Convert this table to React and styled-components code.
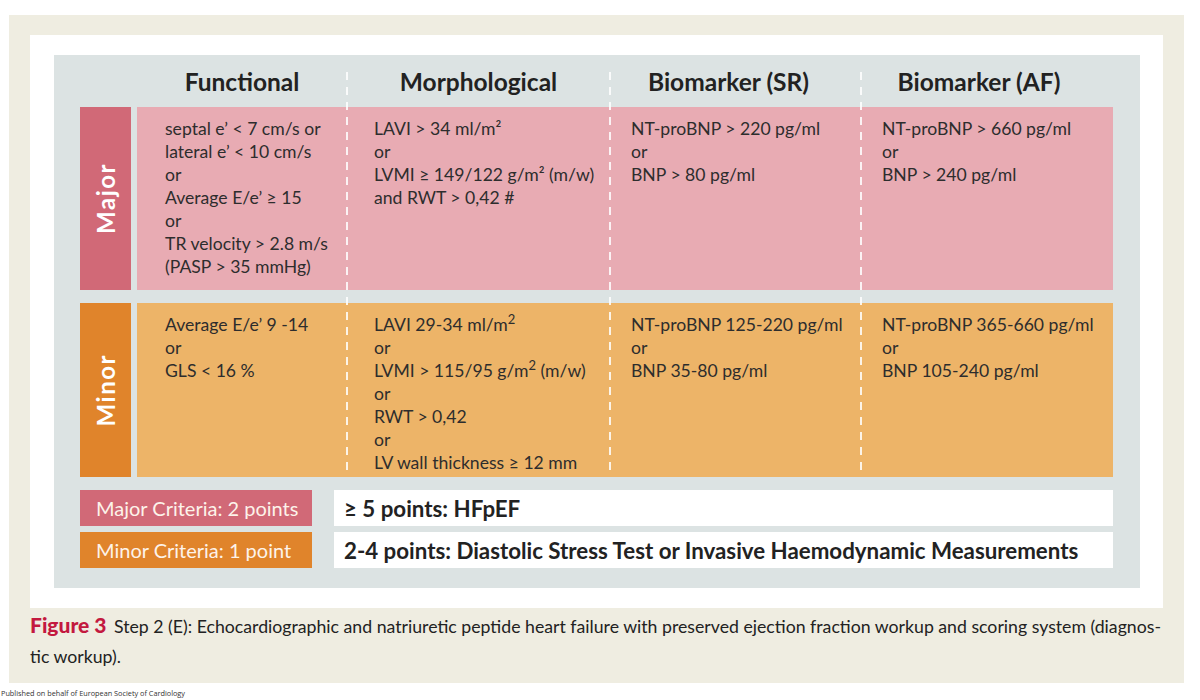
import React from "react";
import styled, { createGlobalStyle } from "styled-components";

const Global = createGlobalStyle`
  body {
    margin: 0;
    background: #ffffff;
    font-family: Lato, "Liberation Sans", sans-serif;
  }
`;

const Page = styled.div`
  width: 1200px;
  height: 700px;
  padding-top: 15px;
  box-sizing: border-box;
  overflow: hidden;
`;

const Frame = styled.div`
  margin-left: 9px;
  width: 1175px;
  height: 668px;
  background: #efede1;
  padding: 20px 21px 0 21px;
  box-sizing: border-box;
`;

const Sheet = styled.div`
  background: #ffffff;
  padding: 20px 23px 20px 24px;
`;

const Board = styled.div`
  background: #dce3e3;
  padding: 0 27px 20px 26px;
`;

const Table = styled.div`
  display: flex;
`;

const LabelColumn = styled.div`
  width: 51px;
  margin-right: 6px;
  display: flex;
  flex-direction: column;
`;

const DataColumn = styled.div`
  width: ${(p) => p.width}px;
  display: flex;
  flex-direction: column;
  position: relative;
  ${(p) =>
    p.dashed &&
    `
    &::before {
      content: "";
      position: absolute;
      left: -1px;
      top: 17px;
      bottom: 0;
      width: 2px;
      background: repeating-linear-gradient(
        to bottom,
        rgba(255,255,255,0.85) 0 8px,
        transparent 8px 15px
      );
    }
  `}
`;

const Header = styled.div`
  height: 52px;
  display: flex;
  align-items: center;
  justify-content: center;
  font-size: 24.5px;
  font-weight: 700;
  color: #222;
  padding-right: ${(p) => p.shift || 0}px;
`;

const RowLabel = styled.div`
  height: ${(p) => p.h}px;
  margin-top: ${(p) => p.mt || 0}px;
  background: ${(p) => p.bg};
  display: flex;
  align-items: center;
  justify-content: center;
  span {
    writing-mode: vertical-rl;
    transform: rotate(180deg);
    color: #fff;
    font-size: 24px;
    font-weight: 700;
    letter-spacing: 1.5px;
  }
`;

const Cell = styled.div`
  height: ${(p) => p.h}px;
  margin-top: ${(p) => p.mt || 0}px;
  background: ${(p) => p.bg};
  padding: 10px 0 0 ${(p) => p.pl}px;
  box-sizing: border-box;
  font-size: 17.6px;
  line-height: 23px;
  color: #2d2d2d;
  white-space: nowrap;
`;

const Sup = styled.sup`
  font-size: 13px;
  line-height: 0;
`;

const Legend = styled.div`
  display: grid;
  grid-template-columns: 232px 1fr;
  column-gap: 22px;
  row-gap: 6px;
  margin-top: 13px;
`;

const Badge = styled.div`
  height: 36px;
  background: ${(p) => p.bg};
  color: #fdf3ea;
  font-size: 20px;
  display: flex;
  align-items: center;
  padding-left: 16px;
`;

const Score = styled.div`
  height: 36px;
  background: #fff;
  color: #222;
  font-size: 22.3px;
  font-weight: 700;
  display: flex;
  align-items: center;
  padding-left: 10px;
  white-space: nowrap;
`;

const Caption = styled.div`
  padding-top: 2px;
  font-size: 17.7px;
  line-height: 30px;
  color: #222;
  white-space: nowrap;
  b {
    color: #c3193f;
    font-size: 21px;
    font-weight: 900;
    margin-right: 3px;
  }
`;

const Footnote = styled.div`
  font-family: "Open Sans", sans-serif;
  font-size: 7.3px;
  color: #333;
  padding: 5px 0 0 1px;
`;

const PINK = "#e8abb3";
const PINK_DARK = "#d16977";
const ORANGE = "#edb468";
const ORANGE_DARK = "#e0842b";

const columns = [
  {
    title: "Functional",
    width: 210,
    pl: 28,
    major: [
      "septal e’ < 7 cm/s or",
      "lateral e’ < 10 cm/s",
      "or",
      "Average E/e’ ≥ 15",
      "or",
      "TR velocity > 2.8 m/s",
      "(PASP > 35 mmHg)",
    ],
    minor: ["Average E/e’ 9 -14", "or", "GLS < 16 %"],
  },
  {
    title: "Morphological",
    width: 263,
    pl: 27,
    major: [
      "LAVI > 34 ml/m²",
      "or",
      "LVMI ≥ 149/122 g/m² (m/w)",
      "and RWT > 0,42 #",
    ],
    minor: [
      <>LAVI 29-34 ml/m<Sup>2</Sup></>,
      "or",
      <>LVMI > 115/95 g/m<Sup>2</Sup> (m/w)</>,
      "or",
      "RWT > 0,42",
      "or",
      "LV wall thickness ≥ 12 mm",
    ],
  },
  {
    title: "Biomarker (SR)",
    width: 251,
    pl: 21,
    shift: 14,
    major: ["NT-proBNP > 220 pg/ml", "or", "BNP > 80 pg/ml"],
    minor: ["NT-proBNP 125-220 pg/ml", "or", "BNP 35-80 pg/ml"],
  },
  {
    title: "Biomarker (AF)",
    width: 252,
    pl: 21,
    shift: 16,
    major: ["NT-proBNP > 660 pg/ml", "or", "BNP > 240 pg/ml"],
    minor: ["NT-proBNP 365-660 pg/ml", "or", "BNP 105-240 pg/ml"],
  },
];

function Lines({ items }) {
  return items.map((t, i) => <div key={i}>{t}</div>);
}

export default function App() {
  return (
    <Page>
      <Global />
      <Frame>
        <Sheet>
          <Board>
            <Table>
              <LabelColumn>
                <Header />
                <RowLabel h={183} bg={PINK_DARK}>
                  <span>Major</span>
                </RowLabel>
                <RowLabel h={174} mt={13} bg={ORANGE_DARK}>
                  <span>Minor</span>
                </RowLabel>
              </LabelColumn>
              {columns.map((c, i) => (
                <DataColumn key={c.title} width={c.width} dashed={i > 0}>
                  <Header shift={c.shift}>{c.title}</Header>
                  <Cell h={183} bg={PINK} pl={c.pl}>
                    <Lines items={c.major} />
                  </Cell>
                  <Cell h={174} mt={13} bg={ORANGE} pl={c.pl}>
                    <Lines items={c.minor} />
                  </Cell>
                </DataColumn>
              ))}
            </Table>
            <Legend>
              <Badge bg={PINK_DARK}>Major Criteria: 2 points</Badge>
              <Score>≥ 5 points: HFpEF</Score>
              <Badge bg={ORANGE_DARK}>Minor Criteria: 1 point</Badge>
              <Score>
                2-4 points: Diastolic Stress Test or Invasive Haemodynamic
                Measurements
              </Score>
            </Legend>
          </Board>
        </Sheet>
        <Caption>
          <div>
            <b>Figure 3</b> Step 2 (E): Echocardiographic and natriuretic
            peptide heart failure with preserved ejection fraction workup and
            scoring system (diagnos-
          </div>
          <div>tic workup).</div>
        </Caption>
      </Frame>
      <Footnote>Published on behalf of European Society of Cardiology</Footnote>
    </Page>
  );
}
